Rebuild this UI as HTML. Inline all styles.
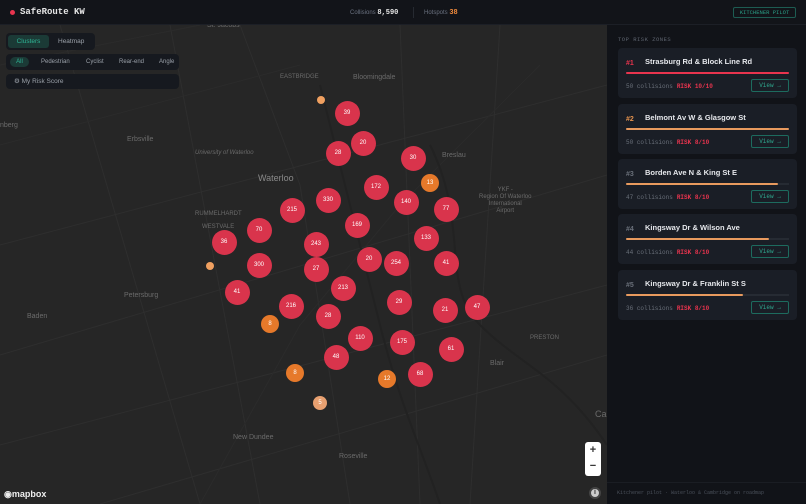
<!DOCTYPE html>
<html><head><meta charset="utf-8"><style>
*{margin:0;padding:0;box-sizing:border-box}
body{width:806px;height:504px;overflow:hidden;background:#262626;font-family:"Liberation Sans",sans-serif;position:relative}
.hdr{position:absolute;left:0;top:0;width:806px;height:25px;background:#121419;border-bottom:1px solid #1c1f26;z-index:5}
.mono{font-family:"Liberation Mono",monospace}
.map{position:absolute;left:0;top:25px;width:607px;height:479px;background:#262626;overflow:hidden}
.side{position:absolute;left:607px;top:25px;width:199px;height:479px;background:#111318}
.c{position:absolute;border-radius:50%;background:#d9344c;color:#fff;font-size:6px;display:flex;align-items:center;justify-content:center;width:25px;height:25px;margin:-12.5px 0 0 -12.5px}
.o{background:#e6792a;width:18px;height:18px;margin:-9px 0 0 -9px}
.lbl{position:absolute;color:#6b6b6b;font-size:7px}
.card{position:absolute;left:618px;width:179px;height:50px;background:#1a1e26;border-radius:4px}
.card .n{position:absolute;left:8px;top:12px;font-size:7px;font-weight:bold;color:#6a707a}
.card .t{position:absolute;left:27px;top:9px;font-size:7.5px;font-weight:bold;color:#e6e8ec}
.card .bar{position:absolute;left:8px;top:24px;height:2px;border-radius:1px;background:#e89a5e}
.card .bg{position:absolute;left:8px;top:24px;width:163px;height:2px;background:#262b33}
.card .s{position:absolute;left:8px;top:35px;font-size:6px;color:#6a707a}
.card .s b{color:#e8344e;margin-left:4px}
.card .v{position:absolute;right:8px;top:31px;width:38px;height:13px;border:1px solid #1d6b5e;border-radius:2px;color:#2fa98f;font-size:6px;text-align:center;line-height:11px}
.pill{position:absolute;background:#16191f;border-radius:4px}
</style></head><body>
<div class="hdr">
<div style="position:absolute;left:10px;top:10px;width:5px;height:5px;border-radius:50%;background:#e8344e"></div>
<div class="mono" style="position:absolute;left:20px;top:7px;font-size:9px;font-weight:bold;color:#e6e6e6">SafeRoute KW</div>
<div style="position:absolute;left:350px;top:9px;font-size:6px;color:#6b7280">Collisions <span class="mono" style="color:#e6e6e6;font-weight:bold;font-size:7px">8,590</span></div>
<div style="position:absolute;left:413px;top:7px;width:1px;height:11px;background:#262a31"></div>
<div style="position:absolute;left:424px;top:9px;font-size:6px;color:#6b7280">Hotspots <span class="mono" style="color:#f08a3c;font-weight:bold;font-size:7px">38</span></div>
<div class="mono" style="position:absolute;left:733px;top:7px;width:63px;height:11px;border:1px solid #1d5c52;border-radius:2px;color:#2a9d85;font-size:5.5px;text-align:center;line-height:9px">KITCHENER PILOT</div>
</div>
<div class="map">
<svg width="607" height="479" style="position:absolute;left:0;top:0" stroke="#2e2e2e" stroke-width="1" fill="none">
<path d="M0 220 L607 60 M0 330 L607 150 M0 420 L607 260 M100 479 L607 330 M60 0 L200 479 M170 0 L260 479 M400 0 L420 479 M500 0 L470 479 M240 0 L300 160 L350 479"/>
<path d="M540 40 L400 180 L300 300 L200 479 M0 120 L300 40 M0 40 L200 0" stroke="#2b2b2b"/>
<path d="M430 120 C470 200 440 260 480 300 C520 340 560 350 607 420" stroke="#222" stroke-width="2"/>
<path d="M320 60 C340 140 360 220 380 300 C400 380 420 420 440 479" stroke="#222" stroke-width="2"/>
</svg>
<div class="lbl" style="left:207px;top:-3px">St. Jacobs</div>
<div class="lbl" style="left:280px;top:49px;font-size:6px">EASTBRIDGE</div>
<div class="lbl" style="left:353px;top:49px">Bloomingdale</div>
<div class="lbl" style="left:0;top:97px">nberg</div>
<div class="lbl" style="left:127px;top:111px">Erbsville</div>
<div class="lbl" style="left:195px;top:125px;font-size:6px;font-style:italic">University of Waterloo</div>
<div class="lbl" style="left:258px;top:148px;font-size:9px;color:#8a8a8a">Waterloo</div>
<div class="lbl" style="left:442px;top:127px">Breslau</div>
<div class="lbl" style="left:479px;top:162px;text-align:center;font-size:6px;line-height:7px">YKF -<br>Region Of Waterloo<br>International<br>Airport</div>
<div class="lbl" style="left:195px;top:186px;font-size:6px">RUMMELHARDT</div>
<div class="lbl" style="left:202px;top:199px;font-size:6px">WESTVALE</div>
<div class="lbl" style="left:124px;top:267px">Petersburg</div>
<div class="lbl" style="left:27px;top:288px">Baden</div>
<div class="lbl" style="left:490px;top:335px">Blair</div>
<div class="lbl" style="left:530px;top:310px;font-size:6px">PRESTON</div>
<div class="lbl" style="left:595px;top:384px;font-size:9px">Ca</div>
<div class="lbl" style="left:233px;top:409px">New Dundee</div>
<div class="lbl" style="left:339px;top:428px">Roseville</div>
<div class="pill" style="left:6px;top:8px;width:89px;height:17px"><div style="position:absolute;left:2px;top:2px;width:41px;height:13px;background:#1b3a36;border-radius:3px;color:#2fb596;font-size:6.5px;text-align:center;line-height:13px">Clusters</div><div style="position:absolute;left:52px;top:2px;font-size:6.5px;color:#9aa0a8;line-height:13px">Heatmap</div></div>
<div class="pill" style="left:6px;top:29px;width:173px;height:16px;font-size:6px;color:#9aa0a8;line-height:16px"><span style="position:absolute;left:4px;top:3px;width:19px;height:10px;background:#1b3a36;border-radius:5px;color:#2fb596;text-align:center;line-height:10px">All</span><span style="position:absolute;left:35px">Pedestrian</span><span style="position:absolute;left:80px">Cyclist</span><span style="position:absolute;left:113px">Rear-end</span><span style="position:absolute;left:153px">Angle</span></div>
<div class="pill" style="left:6px;top:49px;width:173px;height:15px;font-size:6.5px;color:#9aa0a8;line-height:15px;padding-left:8px">⚙ My Risk Score</div>
<div style="position:absolute;left:585px;top:417px;width:16px;height:34px;background:#fff;border-radius:3px;font-size:11px;font-weight:bold;text-align:center;line-height:16px;color:#333">+<br>−</div>
<div style="position:absolute;left:589px;top:462px;width:12px;height:12px;border-radius:50%;background:#ccc;border:2px solid #444;font-size:7px;text-align:center;line-height:8px;font-weight:bold;color:#333">i</div>
<div style="position:absolute;left:4px;top:464px;color:#eee;font-size:9px;font-weight:bold">◉mapbox</div>
</div>
<div style="position:absolute;left:0;top:0">
<div style="left:321px;top:100px;width:8px;height:8px;margin:-4px;background:#f0a060;position:absolute;border-radius:50%"></div>
<div style="left:210px;top:266px;width:8px;height:8px;margin:-4px;background:#f0a060;position:absolute;border-radius:50%"></div>
<div class="c" style="left:347px;top:113px">39</div>
<div class="c" style="left:363px;top:143px">20</div>
<div class="c" style="left:338px;top:153px">28</div>
<div class="c" style="left:413px;top:158px">30</div>
<div class="c o" style="left:430px;top:183px">13</div>
<div class="c" style="left:376px;top:187px">172</div>
<div class="c" style="left:328px;top:200px">330</div>
<div class="c" style="left:406px;top:202px">140</div>
<div class="c" style="left:446px;top:209px">77</div>
<div class="c" style="left:292px;top:210px">215</div>
<div class="c" style="left:357px;top:225px">169</div>
<div class="c" style="left:259px;top:230px">70</div>
<div class="c" style="left:224px;top:242px">36</div>
<div class="c" style="left:316px;top:244px">243</div>
<div class="c" style="left:426px;top:238px">133</div>
<div class="c" style="left:369px;top:259px">20</div>
<div class="c" style="left:396px;top:263px">254</div>
<div class="c" style="left:259px;top:265px">300</div>
<div class="c" style="left:316px;top:269px">27</div>
<div class="c" style="left:446px;top:263px">41</div>
<div class="c" style="left:237px;top:292px">41</div>
<div class="c" style="left:343px;top:288px">213</div>
<div class="c" style="left:291px;top:306px">216</div>
<div class="c" style="left:399px;top:302px">29</div>
<div class="c" style="left:445px;top:310px">21</div>
<div class="c" style="left:477px;top:307px">47</div>
<div class="c" style="left:328px;top:316px">28</div>
<div class="c" style="left:360px;top:338px">110</div>
<div class="c" style="left:402px;top:342px">175</div>
<div class="c" style="left:451px;top:349px">61</div>
<div class="c" style="left:336px;top:357px">48</div>
<div class="c" style="left:420px;top:374px">68</div>
<div class="c o" style="left:387px;top:379px">12</div>
<div class="c o" style="left:295px;top:373px">8</div>
<div class="c o" style="left:270px;top:324px">8</div>
<div class="c o" style="left:320px;top:403px;width:14px;height:14px;margin:-7px 0 0 -7px;background:#e8a070">5</div>
</div>
<div class="side"></div>
<div class="mono" style="position:absolute;left:618px;top:36px;font-size:5.5px;color:#5f6570;letter-spacing:.5px">TOP RISK ZONES</div>
<div class="card" style="top:48px"><span class="n" style="color:#e8344e">#1</span><span class="t">Strasburg Rd &amp; Block Line Rd</span><div class="bg"></div><div class="bar" style="width:163px;background:#e8344e"></div><span class="s mono">50 collisions<b>RISK 10/10</b></span><div class="v mono">View →</div></div>
<div class="card" style="top:104px"><span class="n" style="color:#e8944e">#2</span><span class="t">Belmont Av W &amp; Glasgow St</span><div class="bg"></div><div class="bar" style="width:163px"></div><span class="s mono">50 collisions<b>RISK 8/10</b></span><div class="v mono">View →</div></div>
<div class="card" style="top:159px"><span class="n">#3</span><span class="t">Borden Ave N &amp; King St E</span><div class="bg"></div><div class="bar" style="width:152px"></div><span class="s mono">47 collisions<b>RISK 8/10</b></span><div class="v mono">View →</div></div>
<div class="card" style="top:214px"><span class="n">#4</span><span class="t">Kingsway Dr &amp; Wilson Ave</span><div class="bg"></div><div class="bar" style="width:143px"></div><span class="s mono">44 collisions<b>RISK 8/10</b></span><div class="v mono">View →</div></div>
<div class="card" style="top:270px"><span class="n">#5</span><span class="t">Kingsway Dr &amp; Franklin St S</span><div class="bg"></div><div class="bar" style="width:117px"></div><span class="s mono">36 collisions<b>RISK 8/10</b></span><div class="v mono">View →</div></div>
<div style="position:absolute;left:607px;top:482px;width:199px;height:1px;background:#1a1d23"></div>
<div class="mono" style="position:absolute;left:617px;top:490px;font-size:5px;color:#4a505a">Kitchener pilot · Waterloo &amp; Cambridge on roadmap</div>
</body></html>
